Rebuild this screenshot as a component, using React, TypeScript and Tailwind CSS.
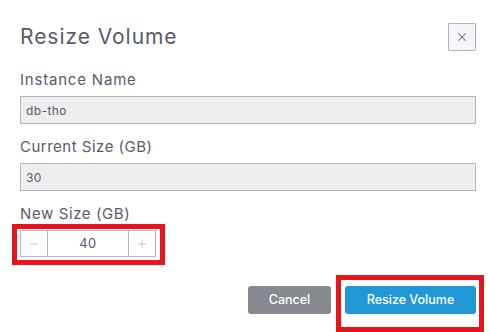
import { Minus, Plus, X } from "lucide-react";

export default function App() {
  return (
    <div
      className="w-[488px] h-[332px] bg-white pl-5 pr-3 pt-[23px] text-[#5b596d] overflow-hidden"
      style={{ fontFamily: "Inter, 'Noto Sans', sans-serif" }}
    >
      {/* Header */}
      <div className="flex items-center justify-between h-7">
        <h2 className="text-[21px] leading-7 font-normal tracking-[0.95px] text-[#5b596d]">
          Resize Volume
        </h2>
        <button
          type="button"
          className="w-7 h-7 flex items-center justify-center border border-[#b5b4c0] bg-[#f4f5fb] rounded-[1px]"
        >
          <X className="w-3.5 h-3.5 text-[#6b6a7c]" strokeWidth={1.8} />
        </button>
      </div>

      {/* Instance Name */}
      <div className="mt-[19px]">
        <label className="block text-[15px] leading-5 tracking-[0.8px] text-[#5b596d]">Instance Name</label>
        <input
          type="text"
          readOnly
          value="db-tho"
          className="mt-1.5 w-full h-7 px-[5px] border border-[#b5b4c0] bg-[#eeeeee] text-[12px] tracking-[0.4px] text-[#5b596d] outline-none"
        />
      </div>

      {/* Current Size */}
      <div className="mt-[13px]">
        <label className="block text-[15px] leading-5 tracking-[0.5px] text-[#5b596d]">Current Size (GB)</label>
        <input
          type="text"
          readOnly
          value="30"
          className="mt-1.5 w-full h-7 px-[5px] border border-[#b5b4c0] bg-[#eeeeee] text-[12px] tracking-[0.4px] text-[#5b596d] outline-none"
        />
      </div>

      {/* New Size */}
      <div className="mt-[13px]">
        <label className="block text-[15px] leading-5 tracking-[0.6px] text-[#5b596d]">New Size (GB)</label>
        <div className="relative mt-1.5 w-[136px]">
          <div className="flex h-[27px] border border-[#b5b4c0]">
            <button type="button" className="w-[27px] flex items-center justify-center border-r border-[#b5b4c0]">
              <Minus className="w-3 h-3 text-[#c9c8d2]" strokeWidth={2} />
            </button>
            <div className="flex-1 flex items-center justify-center text-[13px] tracking-[0.4px] text-[#5b596d]">40</div>
            <button type="button" className="w-[27px] flex items-center justify-center border-l border-[#b5b4c0]">
              <Plus className="w-3 h-3 text-[#c9c8d2]" strokeWidth={2} />
            </button>
          </div>
          <span className="absolute -left-2 -top-1.5 -right-[9px] -bottom-2 border-[5px] border-[#e8141c] pointer-events-none" />
        </div>
      </div>

      {/* Actions */}
      <div className="mt-[29px] flex justify-end gap-3.5">
        <button
          type="button"
          className="w-[83px] h-7 rounded-[3px] bg-[#868990] text-white text-[12.5px] font-medium"
        >
          Cancel
        </button>
        <div className="relative">
          <button
            type="button"
            className="w-[131px] h-7 rounded-[3px] bg-[#2198d5] text-white text-[12.5px] font-medium"
          >
            Resize Volume
          </button>
          <span className="absolute -left-[9px] -top-[11px] -right-[8px] -bottom-[18px] border-[5px] border-[#e8141c] pointer-events-none" />
        </div>
      </div>
    </div>
  );
}
